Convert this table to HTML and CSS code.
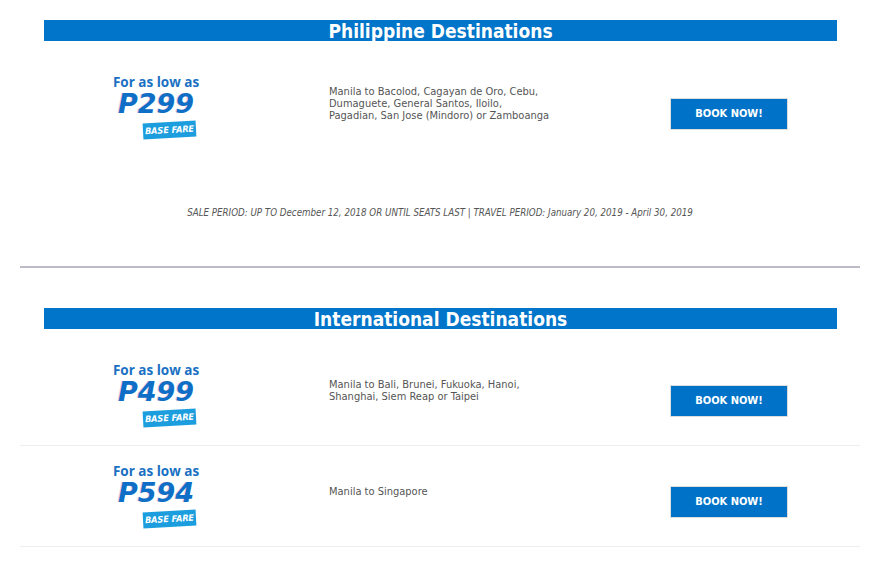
FILE: index.html
```html
<html>
<head>
<link rel="stylesheet" href="styles.css">
</head>
<body>
<div class="page">

<section class="deals">
<h2 class="deals-title">Philippine Destinations</h2>
<div class="deal-list">
<div class="deal">
<div class="price">
<div class="price-label">For as low as</div>
<div class="price-amount">P299</div>
<span class="price-badge">BASE FARE</span>
</div>
<p class="routes">Manila to Bacolod, Cagayan de Oro, Cebu,<br>Dumaguete, General Santos, Iloilo,<br>Pagadian, San Jose (Mindoro) or Zamboanga</p>
<a class="book-btn" href="#">BOOK NOW!</a>
</div>
</div>
<p class="sale-period">SALE PERIOD: UP TO December 12, 2018 OR UNTIL SEATS LAST | TRAVEL PERIOD: January 20, 2019 - April 30, 2019</p>
</section>

<hr class="divider">

<section class="deals deals-intl">
<h2 class="deals-title">International Destinations</h2>
<div class="deal-list">
<div class="deal deal-bordered">
<div class="price">
<div class="price-label">For as low as</div>
<div class="price-amount">P499</div>
<span class="price-badge">BASE FARE</span>
</div>
<p class="routes">Manila to Bali, Brunei, Fukuoka, Hanoi,<br>Shanghai, Siem Reap or Taipei</p>
<a class="book-btn" href="#">BOOK NOW!</a>
</div>
<div class="deal deal-bordered">
<div class="price">
<div class="price-label">For as low as</div>
<div class="price-amount">P594</div>
<span class="price-badge">BASE FARE</span>
</div>
<p class="routes">Manila to Singapore</p>
<a class="book-btn" href="#">BOOK NOW!</a>
</div>
</div>
</section>

</div>
</body>
</html>
```

FILE: styles.css
```css
body {
margin: 0;
background: #fff;
font-family: "DejaVu Sans Condensed", "DejaVu Sans", sans-serif;
}

.page {
width: 840px;
margin: 0 20px;
padding-top: 20px;
}

.deals-title {
margin: 0 23px 0 24px;
height: 21px;
background: #0075c9;
color: #fff;
font-size: 19px;
font-weight: bold;
line-height: 22px;
text-align: center;
overflow: hidden;
}

.deal-list {
margin-top: 16px;
}

.deal {
display: grid;
grid-template-columns: 272px 378px 118px;
align-items: center;
height: 101px;
}

.deal-bordered {
height: 100px;
border-bottom: 1px solid #eee;
}

.price {
margin-bottom: 3px;
text-align: center;
}

.price-label {
font-family: "Open Sans", sans-serif;
font-size: 13.5px;
font-weight: 700;
line-height: 16px;
color: #1a70c2;
}

.price-amount {
margin-top: 1px;
font-family: "DejaVu Sans", sans-serif;
font-size: 27px;
font-weight: bold;
font-style: italic;
line-height: 26px;
color: #0f6fc6;
text-shadow: -1px 0 0 rgba(200, 60, 120, .25);
}

.price-badge {
display: inline-block;
height: 16px;
margin-top: 5px;
margin-left: 27px;
padding: 0 2px;
background: #1c9ede;
color: #fff;
font-size: 9px;
font-weight: bold;
font-style: italic;
line-height: 16px;
transform: rotate(-3deg);
}

.routes {
margin: 0 0 8px 37px;
font-size: 11px;
line-height: 12px;
color: #555;
}

.book-btn {
display: block;
height: 30px;
margin-top: 12px;
border: 1px solid #ddd;
background: #0073c8;
color: #fff;
font-size: 11px;
font-weight: bold;
line-height: 30px;
text-align: center;
text-decoration: none;
}

.sale-period {
margin: 48px 0 0;
font-size: 9.7px;
font-style: italic;
line-height: 13px;
text-align: center;
color: #555;
}

.divider {
height: 2px;
margin: 47px 0 0;
border: 0;
background: #bcbcc6;
}

.deals-intl {
margin-top: 40px;
}
```
